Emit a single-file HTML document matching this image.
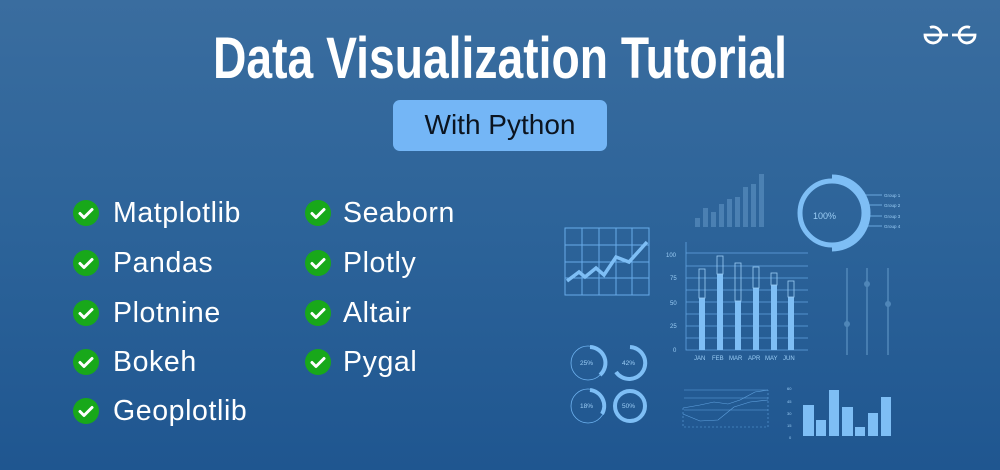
<!DOCTYPE html>
<html><head><meta charset="utf-8"><style>
body{margin:0;width:1000px;height:470px;overflow:hidden;background:linear-gradient(180deg,#3a6d9f 0%,#2c6399 50%,#1f5690 100%);font-family:"Liberation Sans",sans-serif;position:relative}
.box{position:absolute;left:393px;top:100px;width:214px;height:51px;background:#74b6f6;border-radius:7px;color:#0b1420;font-size:28px;text-align:center;line-height:50px}
.it{position:absolute;color:#fff;font-size:28.5px;letter-spacing:.6px;height:30px;line-height:30px}
.ck{position:absolute;width:26px;height:26px;border-radius:50%;background:#18a81a}
.ck svg{position:absolute;left:0;top:0}
</style></head><body>
<svg width="1000" height="470" style="position:absolute;left:0;top:0">
<text x="213" y="78" textLength="574" lengthAdjust="spacingAndGlyphs" font-family="Liberation Sans Narrow, Liberation Sans, sans-serif" font-weight="bold" font-size="58" fill="#fff">Data Visualization Tutorial</text>
<g fill="none" stroke="#fff" stroke-width="2.8"><path d="M930 27.5 A8 8 0 1 1 925 35 H948"/><path d="M970 27.5 A8 8 0 1 0 975 35 H952"/></g>
<g stroke="#6fb4f2" fill="none" stroke-width="1" opacity=".9">
<rect x="565" y="228" width="84" height="67"/>
<path d="M582 228V295M599 228V295M616 228V295M632 228V295M565 245H649M565 262H649M565 278H649"/>
</g>
<polyline points="567,281 579,272 585,277 596,268 604,275 616,257 629,262 647,242" fill="none" stroke="#7ebef5" stroke-width="3.5"/>
<g fill="#5f94c4" opacity=".6"><rect x="695" y="218" width="5" height="9"/><rect x="703" y="208" width="5" height="19"/><rect x="711" y="212" width="5" height="15"/><rect x="719" y="204" width="5" height="23"/><rect x="727" y="199" width="5" height="28"/><rect x="735" y="197" width="5" height="30"/><rect x="743" y="187" width="5" height="40"/><rect x="751" y="184" width="5" height="43"/><rect x="759" y="174" width="5" height="53"/></g>
<circle cx="832" cy="213" r="32" fill="none" stroke="#7ebef5" stroke-width="5"/>
<path d="M832 178 A35 35 0 0 1 832 248" fill="none" stroke="#7ebef5" stroke-width="7"/>
<text x="813" y="219" font-size="9" fill="#9bcdf5">100%</text>
<g stroke="#7ebef5" stroke-width=".8"><path d="M862 195H882M864 205H882M864 216H882M862 226H882"/></g>
<g font-size="4.5" fill="#9bcdf5"><text x="884" y="197">Group 1</text><text x="884" y="207">Group 2</text><text x="884" y="218">Group 3</text><text x="884" y="228">Group 4</text></g>
<g stroke="#6fb4f2" stroke-width=".8" opacity=".8" fill="none"><path d="M686 242V350H808M686 253H808M686 266H808M686 278H808M686 290H808M686 302H808M686 314H808M686 326H808M686 338H808"/></g>
<g font-size="6" fill="#9bcdf5"><text x="666" y="257">100</text><text x="670" y="280">75</text><text x="670" y="305">50</text><text x="670" y="328">25</text><text x="673" y="352">0</text>
<text x="694" y="360">JAN</text><text x="712" y="360">FEB</text><text x="729" y="360">MAR</text><text x="748" y="360">APR</text><text x="765" y="360">MAY</text><text x="783" y="360">JUN</text></g>
<g fill="#7ebef5"><rect x="699" y="298" width="6" height="52"/><rect x="717" y="274" width="6" height="76"/><rect x="735" y="301" width="6" height="49"/><rect x="753" y="288" width="6" height="62"/><rect x="771" y="285" width="6" height="65"/><rect x="788" y="297" width="6" height="53"/></g>
<g fill="none" stroke="#9bcdf5" stroke-width=".8"><rect x="699" y="269" width="6" height="29"/><rect x="717" y="256" width="6" height="18"/><rect x="735" y="263" width="6" height="38"/><rect x="753" y="267" width="6" height="21"/><rect x="771" y="273" width="6" height="12"/><rect x="788" y="281" width="6" height="16"/></g>
<g stroke="#4f86b8" stroke-width="2" opacity=".8"><path d="M847 268V355M867 268V355M888 268V355"/></g>
<g fill="#4f86b8"><circle cx="847" cy="324" r="3"/><circle cx="867" cy="284" r="3"/><circle cx="888" cy="304" r="3"/></g>
<g fill="none" stroke="#6fb4f2" stroke-width=".8"><circle cx="588" cy="363" r="17"/><circle cx="588" cy="406" r="17"/></g>
<g fill="none" stroke="#7ebef5" stroke-width="4"><path d="M590 347 A16 16 0 0 1 600 375"/><path d="M630 347 A16 16 0 1 1 616 372"/><path d="M590 390 A16 16 0 0 1 602 414"/><circle cx="630" cy="406" r="15"/></g>
<g font-size="6.5" fill="#9bcdf5"><text x="580" y="365">25%</text><text x="622" y="365">42%</text><text x="580" y="408">18%</text><text x="622" y="408">50%</text></g>
<g stroke="#6fb4f2" stroke-width=".6" fill="none" opacity=".8"><path d="M684 390H768M684 398H768M684 410H768"/><path d="M683 408 L700 405 L714 402 L728 404 L740 400 L755 392 L768 390"/><path d="M683 414 L700 421 L718 420 L734 407 L750 402 L768 400"/><path d="M683 408 L683 427 L768 427 L768 390" stroke-dasharray="2 2"/></g>
<g fill="#7ebef5"><rect x="803" y="405" width="11" height="31"/><rect x="816" y="420" width="10" height="16"/><rect x="829" y="390" width="10" height="46"/><rect x="842" y="407" width="11" height="29"/><rect x="855" y="427" width="10" height="9"/><rect x="868" y="413" width="10" height="23"/><rect x="881" y="397" width="10" height="39"/></g>
<g font-size="4" fill="#9bcdf5"><text x="787" y="390">60</text><text x="787" y="403">45</text><text x="787" y="415">30</text><text x="787" y="427">15</text><text x="789" y="439">0</text></g>
</svg>
<div class="box">With Python</div>
<div class="ck" style="left:73px;top:200px"><svg width="26" height="26"><path d="M7 13.5l4 4 8-8" fill="none" stroke="#fff" stroke-width="3" stroke-linecap="round" stroke-linejoin="round"/></svg></div>
<div class="ck" style="left:73px;top:250px"><svg width="26" height="26"><path d="M7 13.5l4 4 8-8" fill="none" stroke="#fff" stroke-width="3" stroke-linecap="round" stroke-linejoin="round"/></svg></div>
<div class="ck" style="left:73px;top:300px"><svg width="26" height="26"><path d="M7 13.5l4 4 8-8" fill="none" stroke="#fff" stroke-width="3" stroke-linecap="round" stroke-linejoin="round"/></svg></div>
<div class="ck" style="left:73px;top:349px"><svg width="26" height="26"><path d="M7 13.5l4 4 8-8" fill="none" stroke="#fff" stroke-width="3" stroke-linecap="round" stroke-linejoin="round"/></svg></div>
<div class="ck" style="left:73px;top:398px"><svg width="26" height="26"><path d="M7 13.5l4 4 8-8" fill="none" stroke="#fff" stroke-width="3" stroke-linecap="round" stroke-linejoin="round"/></svg></div>
<div class="ck" style="left:305px;top:200px"><svg width="26" height="26"><path d="M7 13.5l4 4 8-8" fill="none" stroke="#fff" stroke-width="3" stroke-linecap="round" stroke-linejoin="round"/></svg></div>
<div class="ck" style="left:305px;top:250px"><svg width="26" height="26"><path d="M7 13.5l4 4 8-8" fill="none" stroke="#fff" stroke-width="3" stroke-linecap="round" stroke-linejoin="round"/></svg></div>
<div class="ck" style="left:305px;top:300px"><svg width="26" height="26"><path d="M7 13.5l4 4 8-8" fill="none" stroke="#fff" stroke-width="3" stroke-linecap="round" stroke-linejoin="round"/></svg></div>
<div class="ck" style="left:305px;top:349px"><svg width="26" height="26"><path d="M7 13.5l4 4 8-8" fill="none" stroke="#fff" stroke-width="3" stroke-linecap="round" stroke-linejoin="round"/></svg></div>
<div class="it" style="left:113px;top:198px">Matplotlib</div>
<div class="it" style="left:113px;top:248px">Pandas</div>
<div class="it" style="left:113px;top:298px">Plotnine</div>
<div class="it" style="left:113px;top:347px">Bokeh</div>
<div class="it" style="left:113px;top:396px">Geoplotlib</div>
<div class="it" style="left:343px;top:198px">Seaborn</div>
<div class="it" style="left:343px;top:248px">Plotly</div>
<div class="it" style="left:343px;top:298px">Altair</div>
<div class="it" style="left:343px;top:347px">Pygal</div>
</body></html>
